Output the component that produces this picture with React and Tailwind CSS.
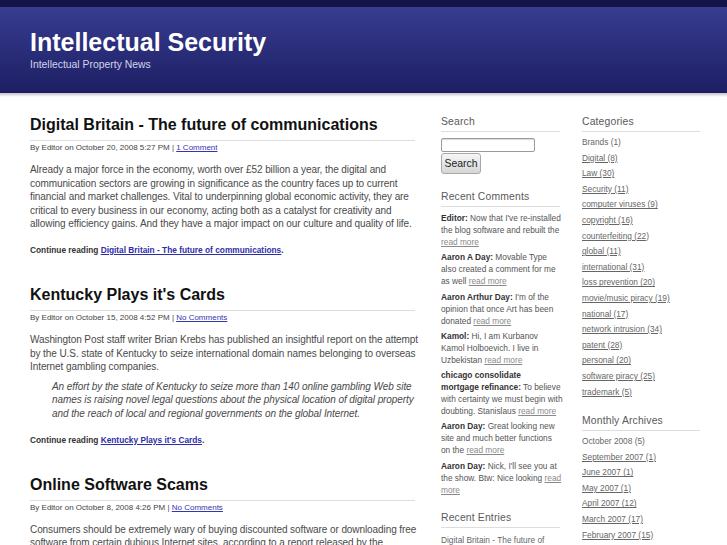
import React from "react";

const font = { fontFamily: '"Liberation Sans", Arial, Helvetica, sans-serif' };

function Lines({ lines }) {
  return lines.map((l, i) => (
    <span key={i} className="block whitespace-nowrap">{l}</span>
  ));
}

function Post({ title, meta, link, children }) {
  return (
    <div className="mb-[29px]">
      <h2 className="text-[16px] font-bold text-[#111] leading-[20px] pb-[5px] border-b border-[#dddddd]">{title}</h2>
      <div className="text-[8px] text-[#444] mt-[1px] leading-[12px] whitespace-nowrap">
        By Editor on {meta} | <a className="text-[#3535b0] underline">{link}</a>
      </div>
      <div className="mt-[9px] text-[10px] tracking-[-0.08px] leading-[13.6px] text-[#4a4a4a]">{children}</div>
    </div>
  );
}

function Continue({ title }) {
  return (
    <p className="mt-[13px] text-[8.32px] tracking-normal leading-[12px] font-bold text-[#333]">
      Continue reading <a className="text-[#2e2ea8] underline">{title}</a>.
    </p>
  );
}

function Heading({ children }) {
  return (
    <h3 className="text-[10.4px] text-[#5a5a5a] leading-[13px] pb-[3px] border-b border-[#dddddd] tracking-[0.15px]">{children}</h3>
  );
}

const comments = [
  ["Editor:", ["Now that I've re-installed", "the blog software and rebuilt the"], ""],
  ["Aaron A Day:", ["Movable Type", "also created a comment for me"], "as well "],
  ["Aaron Arthur Day:", ["I'm of the", "opinion that once Art has been"], "donated "],
  ["Kamol:", ["Hi, I am Kurbanov", "Kamol Holboevich. I live in"], "Uzbekistan "],
];

const cats = [
  ["Brands (1)", false],
  ["Digital (8)", true],
  ["Law (30)", true],
  ["Security (11)", true],
  ["computer viruses (9)", true],
  ["copyright (16)", true],
  ["counterfeiting (22)", true],
  ["global (11)", true],
  ["international (31)", true],
  ["loss prevention (20)", true],
  ["movie/music piracy (19)", true],
  ["national (17)", true],
  ["network intrusion (34)", true],
  ["patent (28)", true],
  ["personal (20)", true],
  ["software piracy (25)", true],
  ["trademark (5)", true],
];

const archives = [
  ["October 2008 (5)", false],
  ["September 2007 (1)", true],
  ["June 2007 (1)", true],
  ["May 2007 (1)", true],
  ["April 2007 (12)", true],
  ["March 2007 (17)", true],
  ["February 2007 (15)", true],
];

function LinkList({ items }) {
  return (
    <ul className="mt-[3px]">
      {items.map(([c, u]) => (
        <li key={c} className={u ? "text-[8.32px] text-[#666] leading-[15.6px] underline whitespace-nowrap" : "text-[8.32px] text-[#666] leading-[15.6px] whitespace-nowrap"}>{c}</li>
      ))}
    </ul>
  );
}

const RM = ({ children = "read more" }) => <a className="underline text-[#8a8a8a]">{children}</a>;

export default function App() {
  return (
    <div className="w-[727px] h-[545px] overflow-hidden bg-white" style={font}>
      <div className="h-[7px] bg-[#14144a]" />
      <div className="h-[86px] bg-gradient-to-b from-[#383d90] to-[#1d1e63] px-[30px] pt-[20px]">
        <h1 className="text-[25px] font-bold text-white leading-[30px]">Intellectual Security</h1>
        <p className="text-[10.4px] text-[#d2d4ea] leading-[13px] mt-[1px]">Intellectual Property News</p>
      </div>
      <div className="h-[4px] bg-gradient-to-b from-[#c4c4c8] to-white" />
      <div className="flex pl-[30px] pt-[18px]">
        <div className="w-[385px] shrink-0">
          <Post title="Digital Britain - The future of communications" meta="October 20, 2008 5:27 PM" link="1 Comment">
            <Lines lines={[
              "Already a major force in the economy, worth over £52 billion a year, the digital and",
              "communication sectors are growing in significance as the country faces up to current",
              "financial and market challenges. Vital to underpinning global economic activity, they are",
              "critical to every business in our economy, acting both as a catalyst for creativity and",
              "allowing efficiency gains. And they have a major impact on our culture and quality of life.",
            ]} />
            <Continue title="Digital Britain - The future of communications" />
          </Post>
          <Post title="Kentucky Plays it's Cards" meta="October 15, 2008 4:52 PM" link="No Comments">
            <Lines lines={[
              "Washington Post staff writer Brian Krebs has published an insightful report on the attempt",
              "by the U.S. state of Kentucky to seize international domain names belonging to overseas",
              "Internet gambling companies.",
            ]} />
            <blockquote className="italic pl-[22px] mt-[6px]">
              <Lines lines={[
                "An effort by the state of Kentucky to seize more than 140 online gambling Web site",
                "names is raising novel legal questions about the physical location of digital property",
                "and the reach of local and regional governments on the global Internet.",
              ]} />
            </blockquote>
            <Continue title="Kentucky Plays it's Cards" />
          </Post>
          <Post title="Online Software Scams" meta="October 8, 2008 4:26 PM" link="No Comments">
            <Lines lines={[
              "Consumers should be extremely wary of buying discounted software or downloading free",
              "software from certain dubious Internet sites, according to a report released by the",
            ]} />
          </Post>
        </div>
        <div className="w-[119px] shrink-0 ml-[26px]">
          <Heading>Search</Heading>
          <input className="block mt-[6px] w-[94px] h-[14px] border border-[#9a9a9a] rounded-[2px] bg-white shadow-[inset_0_1px_1px_rgba(0,0,0,0.15)]" />
          <button className="block mt-[1px] w-[40px] h-[21px] border border-[#a8a8a8] rounded-[3px] bg-gradient-to-b from-[#f6f6f6] to-[#d6d6d6] text-[10.4px] text-[#222] leading-[19px]">Search</button>
          <div className="mt-[16px]">
            <Heading>Recent Comments</Heading>
            <div className="mt-[5px] text-[8.32px] leading-[12px] text-[#555]">
              {comments.map(([n, lines, pre], i) => (
                <div key={i} className="mb-[3.3px] whitespace-nowrap">
                  <span className="block"><b className="text-[#333]">{n}</b> {lines[0]}</span>
                  <span className="block">{lines[1]}</span>
                  <span className="block">{pre}<RM /></span>
                </div>
              ))}
              <div className="mb-[3.3px] whitespace-nowrap">
                <span className="block font-bold text-[#333]">chicago consolidate</span>
                <span className="block"><b className="text-[#333]">mortgage refinance:</b> To believe</span>
                <span className="block">with certainty we must begin with</span>
                <span className="block">doubting. Stanislaus <RM /></span>
              </div>
              <div className="mb-[3.3px] whitespace-nowrap">
                <span className="block"><b className="text-[#333]">Aaron Day:</b> Great looking new</span>
                <span className="block">site and much better functions</span>
                <span className="block">on the <RM /></span>
              </div>
              <div className="whitespace-nowrap">
                <span className="block"><b className="text-[#333]">Aaron Day:</b> Nick, I'll see you at</span>
                <span className="block">the show. Btw: Nice looking <RM>read</RM></span>
                <span className="block"><RM>more</RM></span>
              </div>
            </div>
          </div>
          <div className="mt-[15px]">
            <Heading>Recent Entries</Heading>
            <p className="text-[8.32px] leading-[12px] text-[#666] mt-[6px] whitespace-nowrap">Digital Britain - The future of</p>
          </div>
        </div>
        <div className="w-[118px] shrink-0 ml-[22px]">
          <Heading>Categories</Heading>
          <LinkList items={cats} />
          <div className="mt-[14px]">
            <Heading>Monthly Archives</Heading>
            <LinkList items={archives} />
          </div>
        </div>
      </div>
    </div>
  );
}
